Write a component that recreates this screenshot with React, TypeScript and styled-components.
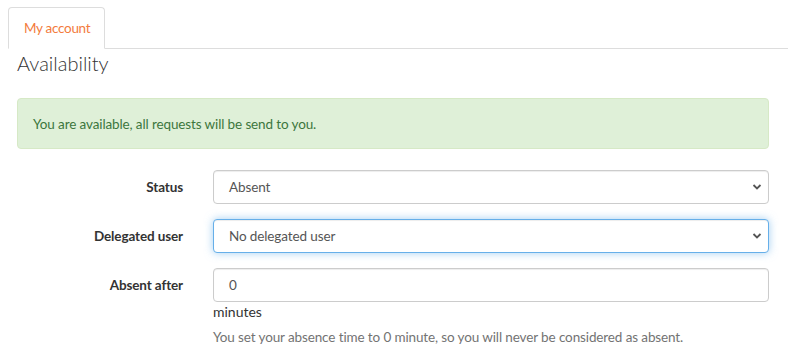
import React from "react";
import styled, { createGlobalStyle } from "styled-components";

const Global = createGlobalStyle`
  html, body { margin: 0; padding: 0; background: #fff; }
  body {
    font-family: "Lato", "Liberation Sans", sans-serif;
    font-size: 13.5px;
    letter-spacing: -0.12px;
    color: #333;
  }
  * { box-sizing: border-box; }
`;

const Page = styled.div`
  padding: 7px 0 0 8px;
`;

const Tabs = styled.ul`
  display: flex;
  list-style: none;
  margin: 0;
  padding: 0;
  border-bottom: 1px solid #ddd;
  height: 42px;
`;

const Tab = styled.li<{ $active?: boolean }>`
  width: 97px;
  height: 42px;
  border: 1px solid ${(p) => (p.$active ? "#ddd" : "transparent")};
  border-bottom-color: ${(p) => (p.$active ? "#fff" : "transparent")};
  border-radius: 4px 4px 0 0;
  background: #fff;
  color: #f37b3c;
  display: flex;
  align-items: center;
  padding-left: 15px;
  font-size: 13.5px;
  letter-spacing: -0.3px;
`;

const Content = styled.div`
  padding: 0 19px 0 9px;
`;

const Heading = styled.h3`
  margin: 1px 0 0;
  font-size: 20px;
  font-weight: 300;
  letter-spacing: 0;
  line-height: 26px;
  color: #333;
`;

const Alert = styled.div`
  margin-top: 22px;
  height: 51px;
  padding: 0 15px;
  display: flex;
  align-items: center;
  background: #dff0d8;
  border: 1px solid #d6e9c6;
  border-radius: 4px;
  color: #3c763d;
`;

const Form = styled.div`
  margin-top: 21px;
  display: grid;
  grid-template-columns: 166px 1fr;
  column-gap: 30px;
  row-gap: 15px;
`;

const Label = styled.label`
  font-weight: 700;
  text-align: right;
  height: 34px;
  line-height: 34px;
`;

const Field = styled.div`
  display: flex;
  flex-direction: column;
`;

const Control = styled.div<{ $focus?: boolean }>`
  height: 34px;
  border: 1px solid ${(p) => (p.$focus ? "#66afe9" : "#ccc")};
  border-radius: 4px;
  box-shadow: ${(p) =>
    p.$focus
      ? "inset 0 1px 1px rgba(0,0,0,.075), 0 0 8px rgba(102,175,233,.6)"
      : "inset 0 1px 1px rgba(0,0,0,.075)"};
  display: flex;
  align-items: center;
  justify-content: space-between;
  padding: 0 6px 0 15px;
  color: #555;
  background: #fff;
`;

const Unit = styled.div`
  margin-top: 0;
  line-height: 20px;
  font-size: 14px;
  letter-spacing: 0;
  color: #333;
`;

const Help = styled.div`
  margin-top: 5px;
  line-height: 20px;
  color: #737373;
`;

const Chevron = () => (
  <svg width="10" height="8" viewBox="0 0 10 8">
    <path d="M1.5 2 L5 5.5 L8.5 2" fill="none" stroke="#555" strokeWidth="1.8" />
  </svg>
);

export default function App() {
  return (
    <Page>
      <Global />
      <Tabs>
        <Tab $active>My account</Tab>
      </Tabs>
      <Content>
        <Heading>Availability</Heading>
        <Alert>You are available, all requests will be send to you.</Alert>
        <Form>
          <Label>Status</Label>
          <Control>
            <span>Absent</span>
            <Chevron />
          </Control>
          <Label>Delegated user</Label>
          <Control $focus>
            <span>No delegated user</span>
            <Chevron />
          </Control>
          <Label>Absent after</Label>
          <Field>
            <Control>
              <span>0</span>
            </Control>
            <Unit>minutes</Unit>
            <Help>
              You set your absence time to 0 minute, so you will never be considered as absent.
            </Help>
          </Field>
        </Form>
      </Content>
    </Page>
  );
}
